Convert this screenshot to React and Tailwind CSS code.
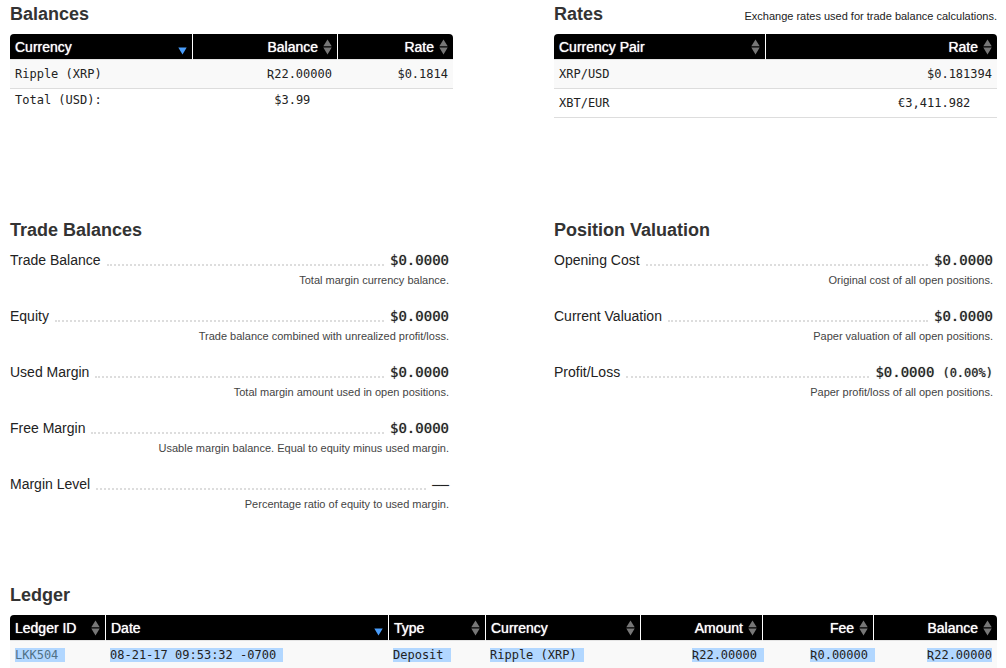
import React from "react";

const NB = "\u00a0";
const PAD = NB + NB + NB;

function SortIcon({ active }) {
  return (
    <svg width="9" height="16" viewBox="0 0 9 16" className="shrink-0" aria-hidden="true">
      {!active && <path d="M4.5 0.5L8.7 7.3H0.3z" fill="#777777" />}
      <path d="M0.3 8.6H8.7L4.5 15.6z" fill={active ? "#4a9dfa" : "#777777"} />
    </svg>
  );
}

function DataTable({ label, columns, children }) {
  return (
    <table aria-label={label} className="w-full table-fixed border-separate border-spacing-0">
      <colgroup>
        {columns.map((c) => (
          <col key={c.name} className={c.width} />
        ))}
      </colgroup>
      <thead>
        <tr>
          {columns.map((c) => (
            <th
              key={c.name}
              scope="col"
              className="border-b border-l border-b-[#e4e4e4] border-l-white bg-black p-0 font-normal first:rounded-tl first:border-l-0 last:rounded-tr"
            >
              <button
                type="button"
                className={`flex h-[25px] w-full items-center gap-[5px] px-[5px] text-sm text-white text-shadow-[0_0_1px_#ffffff] ${
                  c.right ? "justify-end" : "justify-between"
                }`}
              >
                {c.name}
                <SortIcon active={c.active} />
              </button>
            </th>
          ))}
        </tr>
      </thead>
      <tbody className="font-['DejaVu_Sans_Mono',monospace] text-xs">{children}</tbody>
    </table>
  );
}

function Cell({ right, last, striped, children }) {
  return (
    <td
      className={`px-[5px] whitespace-nowrap ${right ? "text-right" : "text-left"} ${
        last ? "h-[22px]" : "h-[29px] border-b border-[#dddddd]"
      } ${striped ? "bg-[#f9f9f9]" : ""}`}
    >
      {children}
    </td>
  );
}

function Selected({ end, children }) {
  return (
    <span className={`inline-block h-3.5 bg-[#b2d7ff] leading-3.5 ${end ? "" : "-mr-[7px] pr-[7px]"}`}>
      {children}
    </span>
  );
}

function Heading({ children }) {
  return <h2 className="text-lg leading-5 font-bold text-[#333333]">{children}</h2>;
}

function Metric({ label, value, extra, note }) {
  return (
    <div className="pr-1">
      <div className="flex h-5 items-center gap-1.5 text-sm">
        <dt>{label}</dt>
        <span className="mt-2.5 grow border-b-2 border-dotted border-[#dddddd]" />
        <dd className="font-['DejaVu_Sans_Mono',monospace] text-shadow-[0_0_1px_#777777]">
          {value}
          {extra && <span className="ml-2 text-xs">{extra}</span>}
        </dd>
      </div>
      <dd className="text-right text-[11px] leading-5 text-[#444444]">{note}</dd>
    </div>
  );
}

const balanceColumns = [
  { name: "Currency", active: true, width: "" },
  { name: "Balance", right: true, width: "w-[145px]" },
  { name: "Rate", right: true, width: "w-[116px]" },
];

const rateColumns = [
  { name: "Currency Pair", width: "" },
  { name: "Rate", right: true, width: "w-[232px]" },
];

const ledgerColumns = [
  { name: "Ledger ID", width: "w-[95px]" },
  { name: "Date", active: true, width: "" },
  { name: "Type", width: "w-[97px]" },
  { name: "Currency", width: "w-[155px]" },
  { name: "Amount", right: true, width: "w-[122px]" },
  { name: "Fee", right: true, width: "w-[111px]" },
  { name: "Balance", right: true, width: "w-[124px]" },
];

const tradeBalances = [
  { label: "Trade Balance", value: "$0.0000", note: "Total margin currency balance." },
  { label: "Equity", value: "$0.0000", note: "Trade balance combined with unrealized profit/loss." },
  { label: "Used Margin", value: "$0.0000", note: "Total margin amount used in open positions." },
  { label: "Free Margin", value: "$0.0000", note: "Usable margin balance. Equal to equity minus used margin." },
  { label: "Margin Level", value: "——", note: "Percentage ratio of equity to used margin." },
];

const valuations = [
  { label: "Opening Cost", value: "$0.0000", note: "Original cost of all open positions." },
  { label: "Current Valuation", value: "$0.0000", note: "Paper valuation of all open positions." },
  { label: "Profit/Loss", value: "$0.0000", extra: "(0.00%)", note: "Paper profit/loss of all open positions." },
];

export default function App() {
  return (
    <main className="bg-white pt-1 pr-[9px] pl-2.5 font-['Liberation_Sans',Arial,sans-serif] text-[#222222]">
      <div className="grid grid-cols-2 gap-x-[101px]">
        <section className="flex flex-col gap-2.5">
          <Heading>Balances</Heading>
          <DataTable label="Balances" columns={balanceColumns}>
            <tr>
              <Cell striped>Ripple (XRP)</Cell>
              <Cell striped right>Ʀ22.00000</Cell>
              <Cell striped right>$0.1814</Cell>
            </tr>
            <tr>
              <Cell last>Total (USD):</Cell>
              <Cell last right>{"$3.99" + PAD}</Cell>
              <Cell last />
            </tr>
          </DataTable>
        </section>
        <section className="flex flex-col gap-2.5">
          <div className="flex h-5 items-end justify-between">
            <Heading>Rates</Heading>
            <p className="text-[11px] leading-4">Exchange rates used for trade balance calculations.</p>
          </div>
          <DataTable label="Rates" columns={rateColumns}>
            <tr>
              <Cell striped>XRP/USD</Cell>
              <Cell striped right>$0.181394</Cell>
            </tr>
            <tr>
              <Cell>XBT/EUR</Cell>
              <Cell right>{"€3,411.982" + PAD}</Cell>
            </tr>
          </DataTable>
        </section>
      </div>

      <div className="mt-[102px] grid grid-cols-2 gap-x-[101px]">
        <section>
          <Heading>Trade Balances</Heading>
          <dl className="mt-2.5 flex flex-col gap-4">
            {tradeBalances.map((m) => (
              <Metric key={m.label} {...m} />
            ))}
          </dl>
        </section>
        <section>
          <Heading>Position Valuation</Heading>
          <dl className="mt-2.5 flex flex-col gap-4">
            {valuations.map((m) => (
              <Metric key={m.label} {...m} />
            ))}
          </dl>
        </section>
      </div>

      <section className="mt-[71px] flex flex-col gap-2.5">
        <Heading>Ledger</Heading>
        <DataTable label="Ledger" columns={ledgerColumns}>
          <tr>
            <Cell striped>
              <Selected>
                <a href="#LKK504" className="text-[#4f7186]">LKK504</a>
              </Selected>
            </Cell>
            <Cell striped><Selected>08-21-17 09:53:32 -0700</Selected></Cell>
            <Cell striped><Selected>Deposit</Selected></Cell>
            <Cell striped><Selected>Ripple (XRP)</Selected></Cell>
            <Cell striped right><Selected>Ʀ22.00000</Selected></Cell>
            <Cell striped right><Selected>Ʀ0.00000</Selected></Cell>
            <Cell striped right><Selected end>Ʀ22.00000</Selected></Cell>
          </tr>
        </DataTable>
      </section>
    </main>
  );
}
